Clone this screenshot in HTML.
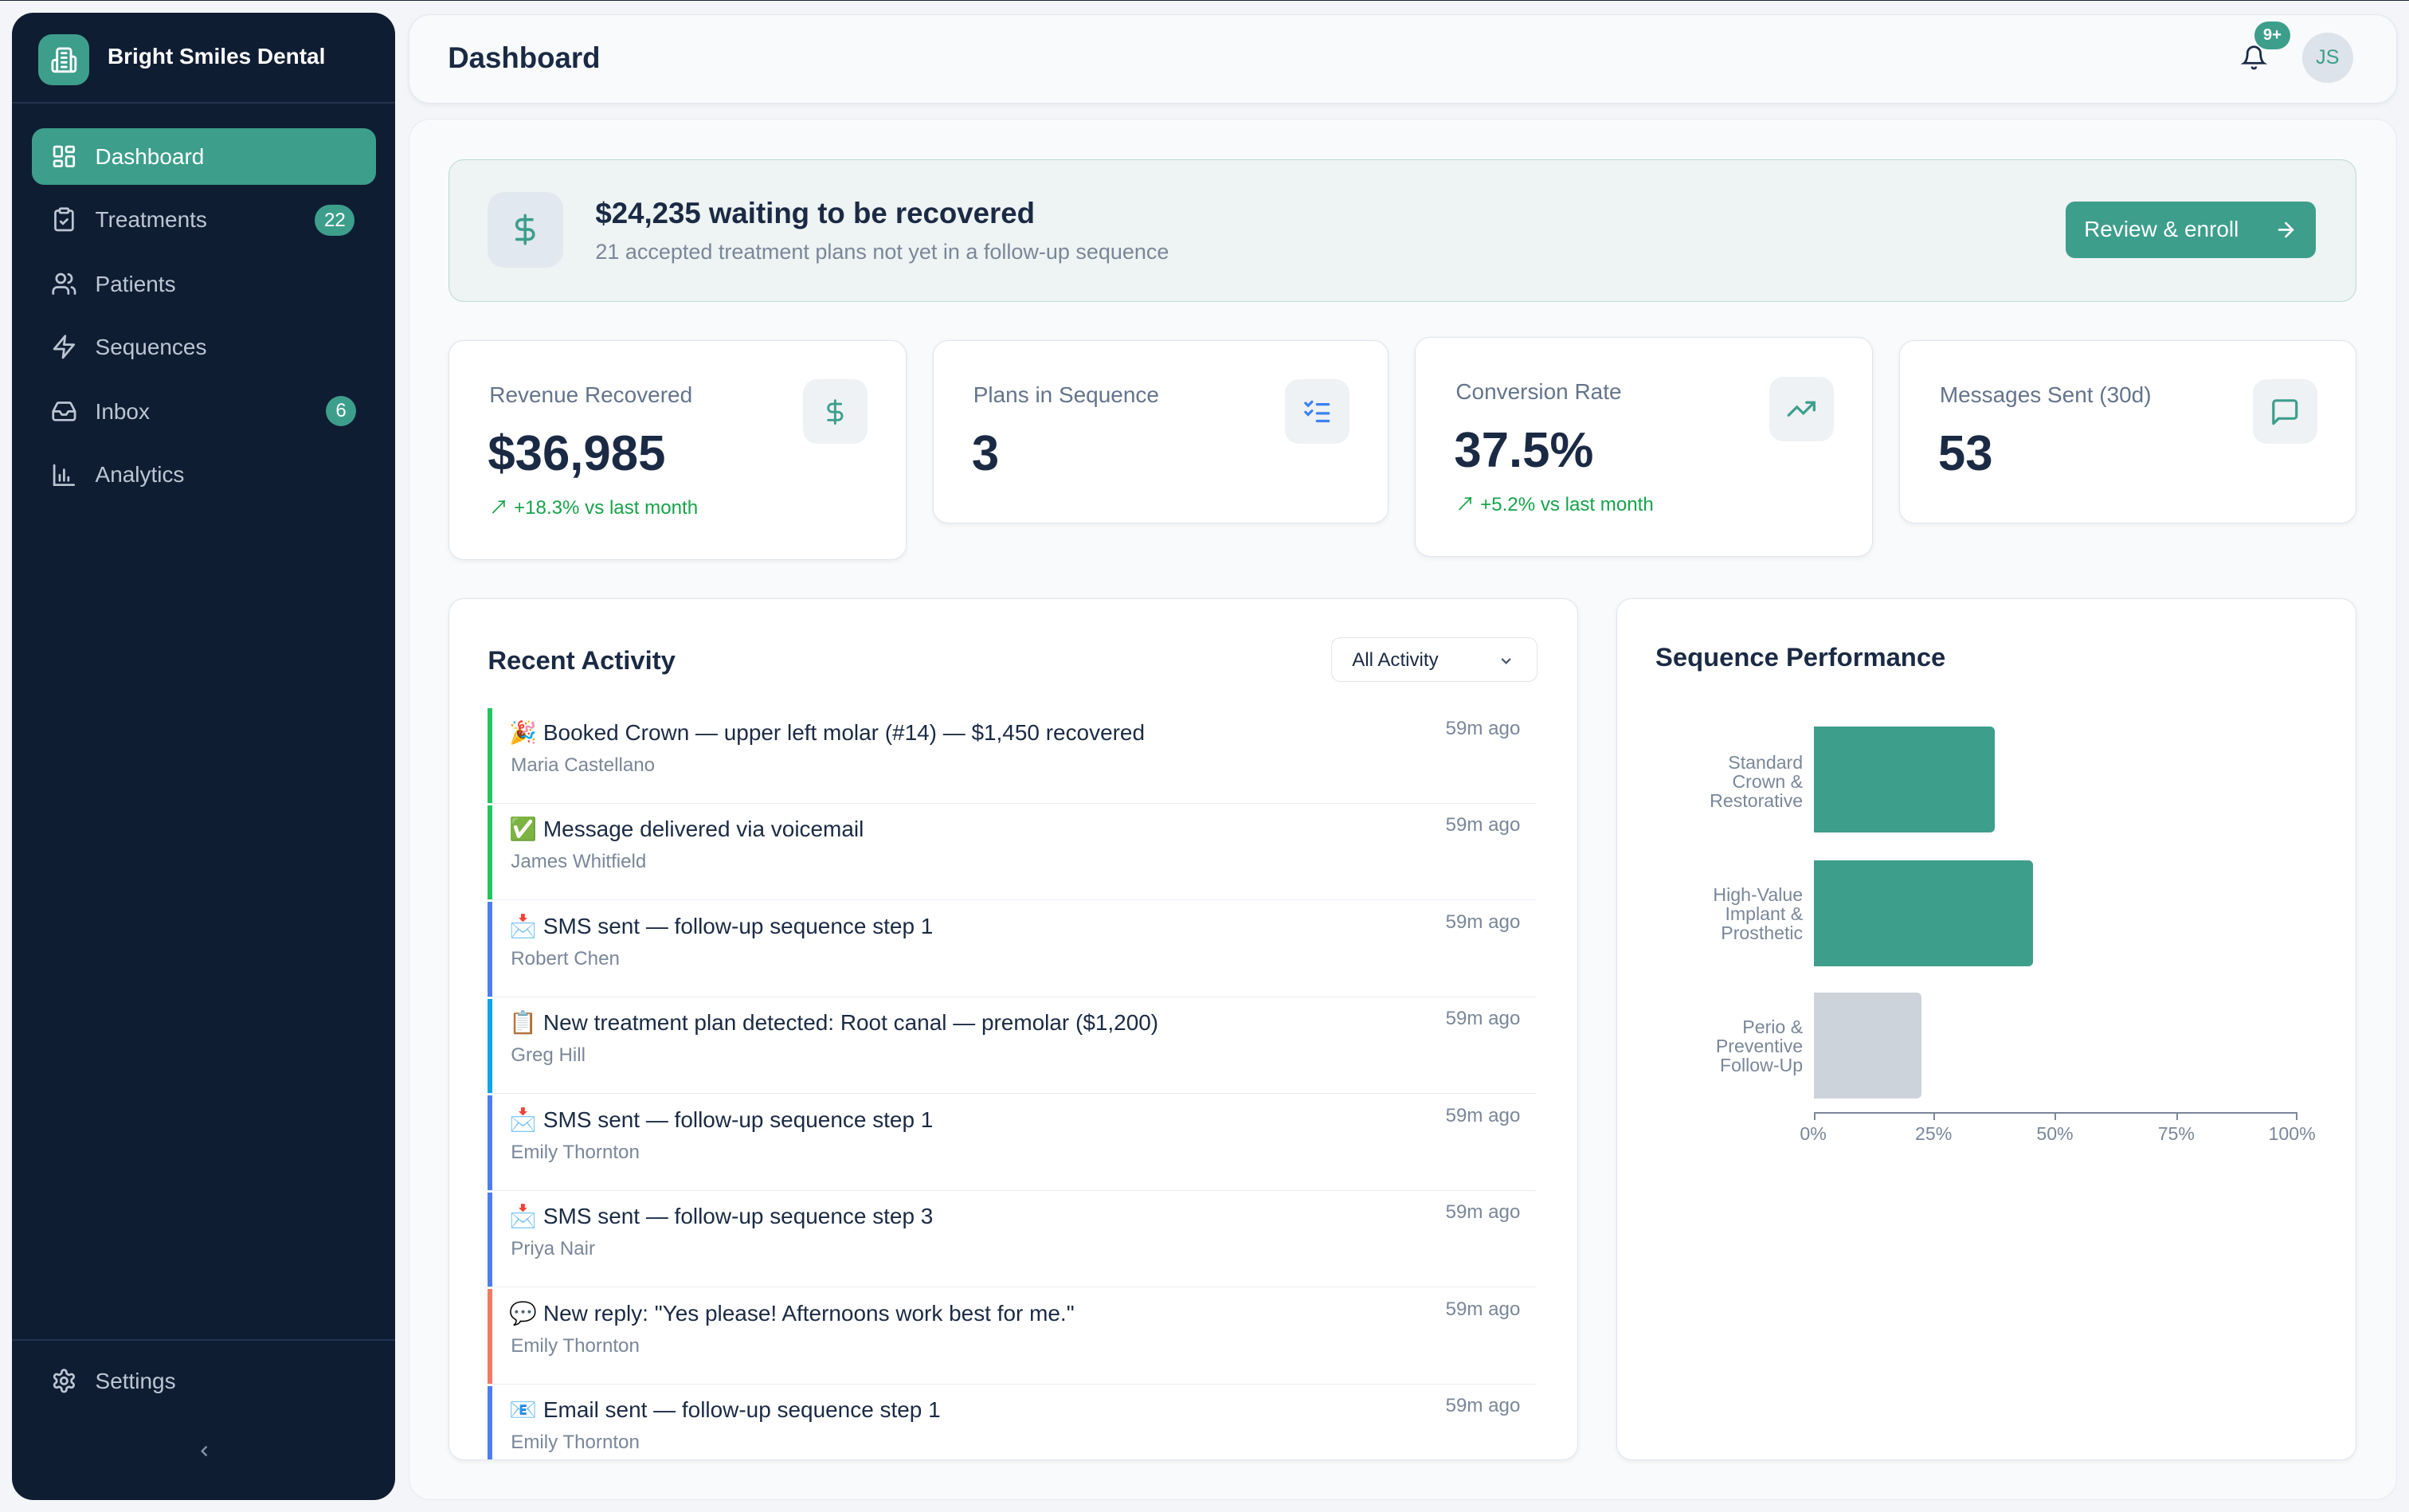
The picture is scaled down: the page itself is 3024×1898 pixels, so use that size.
<!DOCTYPE html>
<html><head><meta charset="utf-8">
<style>
*{box-sizing:border-box;margin:0;padding:0}
html,body{width:3024px;height:1898px;overflow:hidden}
body{background:#f3f5f8;font-family:"Liberation Sans","Noto Sans CJK SC",sans-serif;}
#r{zoom:1.92857;position:relative;width:1568px;height:984px;border-top:1px solid #1a2740}
.a{position:absolute}
.sb{left:8px;top:8px;width:249px;height:968px;background:#0f1d33;border-radius:14px}
.nav{position:absolute;left:13px;width:224px;height:37px;border-radius:8px;color:#bcc6d3;font-size:14.5px;display:flex;align-items:center;padding-left:41px}
.nav svg{position:absolute;left:12px;top:10px}
.nav.act{background:#3d9e8c;color:#fff;font-weight:500}
.bdg{position:absolute;background:#3d9e8c;color:#fff;font-size:12.5px;border-radius:10px;height:20px;display:flex;align-items:center;justify-content:center}
.card{background:#fff;border:1px solid #dfe5ec;border-radius:10px;box-shadow:0 1px 3px rgba(15,29,51,.06)}
.lbl{position:absolute;left:26px;top:27px;font-size:14.5px;color:#64748b}
.val{position:absolute;left:25px;top:55px;font-size:32px;font-weight:700;color:#1b2a44}
.trend{position:absolute;left:26px;top:98px;font-size:12.5px;color:#16a34a}
.ib{position:absolute;right:25px;top:25px;width:42px;height:42px;background:#eef2f5;border-radius:9px;display:flex;align-items:center;justify-content:center}
.it{position:absolute;left:25px;width:682px;height:62px;border-bottom:1px solid #e8edf2}
.it .bar{position:absolute;left:0;top:0;bottom:0;width:3px}
.it .t{position:absolute;left:14px;top:7px;font-size:14.5px;color:#1b2a44;white-space:nowrap}
.it .s{position:absolute;left:15px;top:30px;font-size:12.5px;color:#7a8799}
.it .tm{position:absolute;right:10px;top:6px;font-size:12.5px;color:#7a8799}
.cl{position:absolute;right:360px;font-size:12px;color:#7a8799;text-align:right;line-height:12.5px}
</style></head><body><div id="r">

<div class="a sb">
  <div class="a" style="left:17px;top:14px;width:33px;height:33px;background:#3d9e8c;border-radius:9px;display:flex;align-items:center;justify-content:center">
    <svg width="18" height="18" viewBox="0 0 24 24" fill="none" stroke="#fff" stroke-width="2" stroke-linecap="round" stroke-linejoin="round"><path d="M6 22V4a2 2 0 0 1 2-2h8a2 2 0 0 1 2 2v18Z"/><path d="M6 12H4a2 2 0 0 0-2 2v6a2 2 0 0 0 2 2h2"/><path d="M18 9h2a2 2 0 0 1 2 2v9a2 2 0 0 1-2 2h-2"/><path d="M10 6h4M10 10h4M10 14h4M10 18h4"/></svg>
  </div>
  <div class="a" style="left:62px;top:20px;color:#fff;font-size:14.5px;font-weight:700">Bright Smiles Dental</div>
  <div class="a" style="left:0;top:58px;width:249px;height:1px;background:#22324c"></div>

  <div class="nav act" style="top:75px"><svg width="17" height="17" viewBox="0 0 24 24" fill="none" stroke="#fff" stroke-width="2"><rect x="3" y="3" width="7" height="9" rx="1"/><rect x="14" y="3" width="7" height="5" rx="1"/><rect x="14" y="12" width="7" height="9" rx="1"/><rect x="3" y="16" width="7" height="5" rx="1"/></svg>Dashboard</div>
  <div class="nav" style="top:116px"><svg width="17" height="17" viewBox="0 0 24 24" fill="none" stroke="#bcc6d3" stroke-width="2" stroke-linecap="round"><rect x="8" y="2" width="8" height="4" rx="1"/><path d="M16 4h2a2 2 0 0 1 2 2v14a2 2 0 0 1-2 2H6a2 2 0 0 1-2-2V6a2 2 0 0 1 2-2h2"/><path d="m9 14 2 2 4-4"/></svg>Treatments</div>
  <div class="bdg" style="left:197px;top:125px;width:26px">22</div>
  <div class="nav" style="top:158px"><svg width="17" height="17" viewBox="0 0 24 24" fill="none" stroke="#bcc6d3" stroke-width="2" stroke-linecap="round"><path d="M16 21v-2a4 4 0 0 0-4-4H6a4 4 0 0 0-4 4v2"/><circle cx="9" cy="7" r="4"/><path d="M22 21v-2a4 4 0 0 0-3-3.9M16 3.1a4 4 0 0 1 0 7.8"/></svg>Patients</div>
  <div class="nav" style="top:199px"><svg width="17" height="17" viewBox="0 0 24 24" fill="none" stroke="#bcc6d3" stroke-width="2" stroke-linejoin="round"><path d="M13 2 3 14h9l-1 8 10-12h-9l1-8z"/></svg>Sequences</div>
  <div class="nav" style="top:241px"><svg width="17" height="17" viewBox="0 0 24 24" fill="none" stroke="#bcc6d3" stroke-width="2" stroke-linejoin="round"><path d="M22 12h-6l-2 3h-4l-2-3H2"/><path d="M5.5 5.1 2 12v6a2 2 0 0 0 2 2h16a2 2 0 0 0 2-2v-6l-3.5-6.9A2 2 0 0 0 16.8 4H7.2a2 2 0 0 0-1.7 1.1z"/></svg>Inbox</div>
  <div class="bdg" style="left:204px;top:249px;width:20px">6</div>
  <div class="nav" style="top:282px"><svg width="17" height="17" viewBox="0 0 24 24" fill="none" stroke="#bcc6d3" stroke-width="2" stroke-linecap="round"><path d="M3 3v18h18M8 17v-5M12 17V7M16 17v-3"/></svg>Analytics</div>

  <div class="a" style="left:0;top:863px;width:249px;height:1px;background:#22324c"></div>
  <div class="nav" style="top:872px"><svg width="17" height="17" viewBox="0 0 24 24" fill="none" stroke="#bcc6d3" stroke-width="2"><circle cx="12" cy="12" r="3"/><path d="M12.2 2h-.4a2 2 0 0 0-2 2v.2a2 2 0 0 1-1 1.7l-.4.3a2 2 0 0 1-2 0l-.2-.1a2 2 0 0 0-2.7.7l-.2.4a2 2 0 0 0 .7 2.7l.2.1a2 2 0 0 1 1 1.7v.5a2 2 0 0 1-1 1.8l-.2.1a2 2 0 0 0-.7 2.7l.2.4a2 2 0 0 0 2.7.7l.2-.1a2 2 0 0 1 2 0l.4.3a2 2 0 0 1 1 1.7v.2a2 2 0 0 0 2 2h.4a2 2 0 0 0 2-2v-.2a2 2 0 0 1 1-1.7l.4-.3a2 2 0 0 1 2 0l.2.1a2 2 0 0 0 2.7-.7l.2-.4a2 2 0 0 0-.7-2.7l-.2-.1a2 2 0 0 1-1-1.8v-.5a2 2 0 0 1 1-1.7l.2-.1a2 2 0 0 0 .7-2.7l-.2-.4a2 2 0 0 0-2.7-.7l-.2.1a2 2 0 0 1-2 0l-.4-.3a2 2 0 0 1-1-1.7V4a2 2 0 0 0-2-2z"/></svg>Settings</div>
  <svg class="a" style="left:119px;top:930px" width="12" height="12" viewBox="0 0 24 24" fill="none" stroke="#8492a6" stroke-width="2.5"><path d="m15 18-6-6 6-6"/></svg>
</div>

<div class="a" style="left:266px;top:9px;width:1294px;height:58px;background:#f8fafc;border:1px solid #e3e8ee;border-radius:14px;box-shadow:0 1px 3px rgba(15,29,51,.06)">
  <div class="a" style="left:25px;top:17px;font-size:19px;font-weight:700;color:#1b2a44">Dashboard</div>
  <svg class="a" style="left:1192px;top:19px" width="17" height="17" viewBox="0 0 24 24" fill="none" stroke="#1b2a44" stroke-width="2" stroke-linecap="round"><path d="M6 8a6 6 0 0 1 12 0c0 7 3 9 3 9H3s3-2 3-9"/><path d="M10.3 21a1.94 1.94 0 0 0 3.4 0"/></svg>
  <div class="a" style="left:1201px;top:4px;width:23px;height:18px;background:#3d9e8c;border-radius:9px;color:#fff;font-size:10.5px;font-weight:700;display:flex;align-items:center;justify-content:center">9+</div>
  <div class="a" style="left:1232px;top:11px;width:33px;height:33px;border-radius:50%;background:#dde3ea;color:#3d9e8c;font-size:13px;display:flex;align-items:center;justify-content:center">JS</div>
</div>

<div class="a" style="left:266px;top:77px;width:1294px;height:899px;background:#f8fafb;border:1px solid #e6ebf0;border-radius:14px"></div>

<div class="a" style="left:292px;top:103px;width:1242px;height:93px;background:#eef3f3;border:1px solid #bcd8d3;border-radius:10px">
  <div class="a" style="left:25px;top:21px;width:49px;height:49px;background:#e2e8ef;border-radius:11px;display:flex;align-items:center;justify-content:center">
    <svg width="22" height="26" viewBox="0 0 24 24" fill="none" stroke="#3d9e8c" stroke-width="2" stroke-linecap="round"><path d="M12 2v20M17 5H9.5a3.5 3.5 0 0 0 0 7h5a3.5 3.5 0 0 1 0 7H6"/></svg>
  </div>
  <div class="a" style="left:95px;top:24px;font-size:19px;font-weight:700;color:#1b2a44">$24,235 waiting to be recovered</div>
  <div class="a" style="left:95px;top:52px;font-size:14px;color:#7a8799">21 accepted treatment plans not yet in a follow-up sequence</div>
  <div class="a" style="left:1052px;top:27px;width:163px;height:37px;background:#3d9e8c;border-radius:6px;color:#fff;font-size:14.5px;font-weight:500;display:flex;align-items:center;padding-left:12px">Review &amp; enroll
    <svg style="position:absolute;right:12px;top:11px" width="15" height="15" viewBox="0 0 24 24" fill="none" stroke="#fff" stroke-width="2.2" stroke-linecap="round"><path d="M5 12h14M12 5l7 7-7 7"/></svg></div>
</div>

<div class="a card" style="left:292px;top:221px;width:298px;height:143px">
  <div class="lbl">Revenue Recovered</div><div class="val">$36,985</div>
  <div class="trend">↗ +18.3% vs last month</div>
  <div class="ib"><svg width="18" height="22" viewBox="0 0 24 24" fill="none" stroke="#3d9e8c" stroke-width="2" stroke-linecap="round"><path d="M12 2v20M17 5H9.5a3.5 3.5 0 0 0 0 7h5a3.5 3.5 0 0 1 0 7H6"/></svg></div>
</div>
<div class="a card" style="left:607px;top:221px;width:297px;height:119px">
  <div class="lbl">Plans in Sequence</div><div class="val">3</div>
  <div class="ib"><svg width="20" height="20" viewBox="0 0 24 24" fill="none" stroke="#3b82f6" stroke-width="2" stroke-linecap="round"><path d="m3 5 2 2 3-3M3 12l2 2 3-3M12 6h9M12 13h9M12 19h9"/></svg></div>
</div>
<div class="a card" style="left:921px;top:219px;width:298px;height:143px">
  <div class="lbl">Conversion Rate</div><div class="val">37.5%</div>
  <div class="trend">↗ +5.2% vs last month</div>
  <div class="ib"><svg width="20" height="20" viewBox="0 0 24 24" fill="none" stroke="#3d9e8c" stroke-width="2" stroke-linecap="round"><path d="m22 7-8.5 8.5-5-5L2 17M16 7h6v6"/></svg></div>
</div>
<div class="a card" style="left:1236px;top:221px;width:298px;height:119px">
  <div class="lbl">Messages Sent (30d)</div><div class="val">53</div>
  <div class="ib"><svg width="20" height="20" viewBox="0 0 24 24" fill="none" stroke="#3d9e8c" stroke-width="2" stroke-linejoin="round"><path d="M21 15a2 2 0 0 1-2 2H7l-4 4V5a2 2 0 0 1 2-2h14a2 2 0 0 1 2 2z"/></svg></div>
</div>

<div class="a card" style="left:292px;top:389px;width:735px;height:561px;overflow:hidden">
  <div class="a" style="left:25px;top:30px;font-size:17px;font-weight:700;color:#1b2a44">Recent Activity</div>
  <div class="a" style="left:574px;top:25px;width:134px;height:29px;border:1px solid #dfe5ec;border-radius:6px;font-size:12.5px;color:#1b2a44;padding:7px 0 0 13px">All Activity
    <svg style="position:absolute;right:14px;top:9px" width="11" height="11" viewBox="0 0 24 24" fill="none" stroke="#475569" stroke-width="2.5"><path d="m6 9 6 6 6-6"/></svg></div>

  <div class="it" style="top:71px"><div class="bar" style="background:#22c55e"></div><div class="t">🎉 Booked Crown — upper left molar (#14) — $1,450 recovered</div><div class="s">Maria Castellano</div><div class="tm">59m ago</div></div>
  <div class="it" style="top:134px"><div class="bar" style="background:#22c55e"></div><div class="t">✅ Message delivered via voicemail</div><div class="s">James Whitfield</div><div class="tm">59m ago</div></div>
  <div class="it" style="top:197px"><div class="bar" style="background:#4f7cf0"></div><div class="t">📩 SMS sent — follow-up sequence step 1</div><div class="s">Robert Chen</div><div class="tm">59m ago</div></div>
  <div class="it" style="top:260px"><div class="bar" style="background:#0ea5e9"></div><div class="t">📋 New treatment plan detected: Root canal — premolar ($1,200)</div><div class="s">Greg Hill</div><div class="tm">59m ago</div></div>
  <div class="it" style="top:323px"><div class="bar" style="background:#4f7cf0"></div><div class="t">📩 SMS sent — follow-up sequence step 1</div><div class="s">Emily Thornton</div><div class="tm">59m ago</div></div>
  <div class="it" style="top:386px"><div class="bar" style="background:#4f7cf0"></div><div class="t">📩 SMS sent — follow-up sequence step 3</div><div class="s">Priya Nair</div><div class="tm">59m ago</div></div>
  <div class="it" style="top:449px"><div class="bar" style="background:#f07a63"></div><div class="t">💬 New reply: "Yes please! Afternoons work best for me."</div><div class="s">Emily Thornton</div><div class="tm">59m ago</div></div>
  <div class="it" style="top:512px"><div class="bar" style="background:#4f7cf0"></div><div class="t">📧 Email sent — follow-up sequence step 1</div><div class="s">Emily Thornton</div><div class="tm">59m ago</div></div>
</div>

<div class="a card" style="left:1052px;top:389px;width:482px;height:561px">
  <div class="a" style="left:25px;top:28px;font-size:17px;font-weight:700;color:#1b2a44">Sequence Performance</div>
  <div class="cl" style="top:100px">Standard<br>Crown &amp;<br>Restorative</div>
  <div class="cl" style="top:186px">High-Value<br>Implant &amp;<br>Prosthetic</div>
  <div class="cl" style="top:272px">Perio &amp;<br>Preventive<br>Follow-Up</div>
  <div class="a" style="left:128px;top:83px;width:118px;height:69px;background:#3d9e8c;border-radius:0 3px 3px 0"></div>
  <div class="a" style="left:128px;top:170px;width:143px;height:69px;background:#3d9e8c;border-radius:0 3px 3px 0"></div>
  <div class="a" style="left:128px;top:256px;width:70px;height:69px;background:#cdd3db;border-radius:0 3px 3px 0"></div>
  <div class="a" style="left:128px;top:334px;width:315px;height:1px;background:#7a8799"></div>
  <div class="a" style="left:128px;top:334px;width:1px;height:5px;background:#7a8799"></div>
  <div class="a" style="left:206px;top:334px;width:1px;height:5px;background:#7a8799"></div>
  <div class="a" style="left:285px;top:334px;width:1px;height:5px;background:#7a8799"></div>
  <div class="a" style="left:364px;top:334px;width:1px;height:5px;background:#7a8799"></div>
  <div class="a" style="left:442px;top:334px;width:1px;height:5px;background:#7a8799"></div>
  <div class="a" style="left:119px;top:341px;font-size:12px;color:#7a8799">0%</div>
  <div class="a" style="left:194px;top:341px;font-size:12px;color:#7a8799">25%</div>
  <div class="a" style="left:273px;top:341px;font-size:12px;color:#7a8799">50%</div>
  <div class="a" style="left:352px;top:341px;font-size:12px;color:#7a8799">75%</div>
  <div class="a" style="left:424px;top:341px;font-size:12px;color:#7a8799">100%</div>
</div>

</div></body></html>
